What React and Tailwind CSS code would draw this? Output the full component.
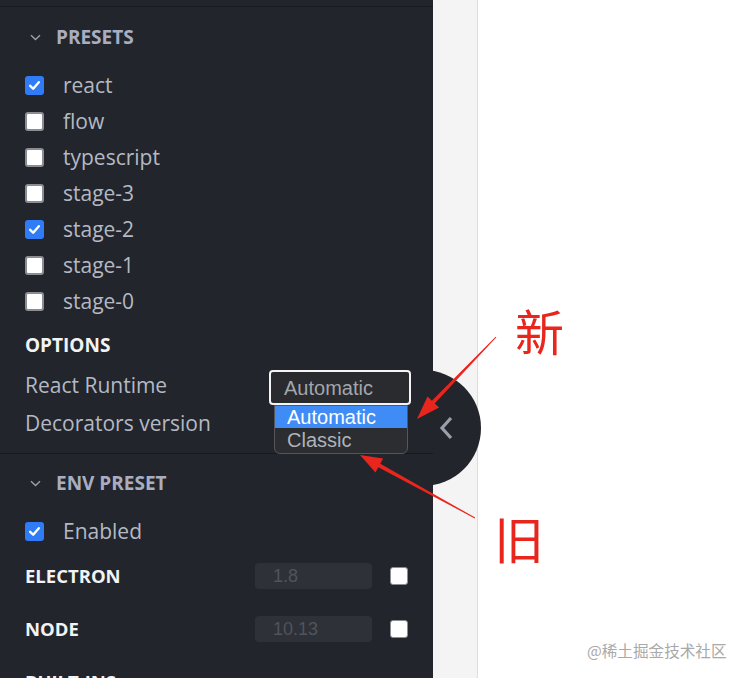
import React from 'react';

const presets = [
  { name: 'react', on: true },
  { name: 'flow', on: false },
  { name: 'typescript', on: false },
  { name: 'stage-3', on: false },
  { name: 'stage-2', on: true },
  { name: 'stage-1', on: false },
  { name: 'stage-0', on: false },
];

function Box({ on }) {
  if (on) {
    return (
      <span className="flex h-[19px] w-[19px] items-center justify-center rounded-[3px] bg-[#2f7cf6]">
        <svg width="13" height="13" viewBox="0 0 12 12" fill="none">
          <path d="M2 6.3 4.8 9 10 3" stroke="#fff" strokeWidth="2.2" strokeLinecap="round" strokeLinejoin="round" />
        </svg>
      </span>
    );
  }
  return <span className="block h-[19px] w-[19px] rounded-[3px] border-2 border-[#8a8d93] bg-white" />;
}

function Chevron() {
  return (
    <svg width="11" height="7" viewBox="0 0 11 7" fill="none" className="mr-[15px]">
      <path d="M1 1.2 5.5 5.6 10 1.2" stroke="#9ba1ad" strokeWidth="1.4" />
    </svg>
  );
}

function SectionHeader({ title, h }) {
  return (
    <div className={`flex items-center pl-[30px] ${h}`}>
      <Chevron />
      <span className="text-[19px] font-bold text-[#a8aec0]">{title}</span>
    </div>
  );
}

function EnvRow({ label, value, h }) {
  return (
    <div className={`flex items-center pl-[25px] pr-[25px] ${h}`}>
      <span className="flex-1 text-[18.5px] font-bold text-[#f2f3f5]">{label}</span>
      <div className="flex h-[26px] w-[117px] items-center rounded-[4px] bg-[#2e3138] pl-[18px] font-['Liberation_Sans'] text-[18px] text-[#50545c]">
        {value}
      </div>
      <span className="ml-[18px] block h-[18px] w-[18px] rounded-[3px] border border-[#8a8d93] bg-white" />
    </div>
  );
}

export default function App() {
  return (
    <div className="relative flex h-[678px] w-[747px] overflow-hidden bg-white font-['Open_Sans',sans-serif]">
      {/* collapse handle behind panel */}
      <div className="absolute left-[365px] top-[370px] z-10 flex h-[116px] w-[116px] items-center rounded-full bg-[#22252b] pl-[74px]">
        <svg width="14" height="24" viewBox="0 0 14 24" fill="none">
          <path d="M12 2 3 12l9 10" stroke="#9aa0ab" strokeWidth="3.2" />
        </svg>
      </div>

      <div className="relative z-20 h-full w-[433px] shrink-0 bg-[#22252b]">
        <div className="h-[7px] border-b border-[#191b1f]" />

        <SectionHeader title="PRESETS" h="h-[60px]" />
        <div>
          {presets.map((p) => (
            <div key={p.name} className="flex h-[36px] items-center pl-[25px]">
              <Box on={p.on} />
              <span className="ml-[19px] pt-[2px] text-[21px] text-[#b4b9c4]">{p.name}</span>
            </div>
          ))}
        </div>

        <div className="mt-[8px] flex h-[36px] items-center pl-[25px] text-[19px] font-bold text-[#f2f3f5]">OPTIONS</div>
        <div className="mt-[3px] flex h-[38px] items-center pl-[25px] pr-[22px]">
          <span className="flex-1 pt-[2px] text-[21px] text-[#b4b9c4]">React Runtime</span>
          <div className="relative mt-[5px] w-[142px]">
            <div className="flex h-[35px] items-center rounded-[4px] border-2 border-[#f4f4f4] bg-[#2a2b2f] pl-[13px] font-['Liberation_Sans'] text-[20px] text-[#a3a6ab]">
              Automatic
            </div>
            <div className="absolute left-[5px] top-full w-[134px] overflow-hidden rounded-[6px] rounded-t-none border border-[#55575c] bg-[#2b2d31] font-['Liberation_Sans'] text-[20px] leading-[22px]">
              <div className="bg-[#3f8cf7] pl-[12px] text-white">Automatic</div>
              <div className="pb-[2px] pl-[12px] pt-[1px] text-[#b0b3b8]">Classic</div>
            </div>
          </div>
        </div>
        <div className="flex h-[38px] items-center pl-[25px]">
          <span className="pt-[2px] text-[21px] text-[#b4b9c4]">Decorators version</span>
        </div>
        <div className="h-[12px] border-b border-[#17191c]" />

        <SectionHeader title="ENV PRESET" h="h-[59px]" />
        <div className="flex h-[36px] items-center pl-[25px]">
          <Box on />
          <span className="ml-[19px] pt-[2px] text-[21px] text-[#b4b9c4]">Enabled</span>
        </div>
        <EnvRow label="ELECTRON" value="1.8" h="h-[54px]" />
        <EnvRow label="NODE" value="10.13" h="h-[52px]" />
        <div className="flex h-[54px] items-center pl-[25px] text-[18.5px] font-bold text-[#f2f3f5]">BUILT-INS</div>
      </div>

      <div className="relative z-0 w-[45px] shrink-0 border-r border-[#dddddd] bg-[#f4f4f4]" />
      <div className="flex-1 bg-white" />

      {/* annotations */}
      <svg className="pointer-events-none absolute inset-0 z-30" width="747" height="678" viewBox="0 0 747 678">
        <polygon
          fill="#e8261e"
          points="496.4,337.3 434.7,403.5 439.1,407.6 417,419 427.5,396.5 431.9,400.7 495.6,336.7"
        />
        <polygon
          fill="#e8261e"
          points="475.2,517.6 380.3,463.7 383.1,458.5 360,455 375.5,472.5 378.3,467.3 474.8,518.4"
        />
      </svg>
      <div className="absolute left-[515px] top-[305px] z-30 font-['Noto_Sans_CJK_SC',sans-serif] text-[49px] leading-none text-[#e8261e]">新</div>
      <div className="absolute left-[494px] top-[512px] z-30 font-['Noto_Sans_CJK_SC',sans-serif] text-[50px] leading-none text-[#e8261e]">旧</div>
      <div className="absolute left-[587px] top-[639px] z-30 font-['Noto_Sans_CJK_SC',sans-serif] text-[15.6px] text-[#a9a9a9]">@稀土掘金技术社区</div>
    </div>
  );
}
